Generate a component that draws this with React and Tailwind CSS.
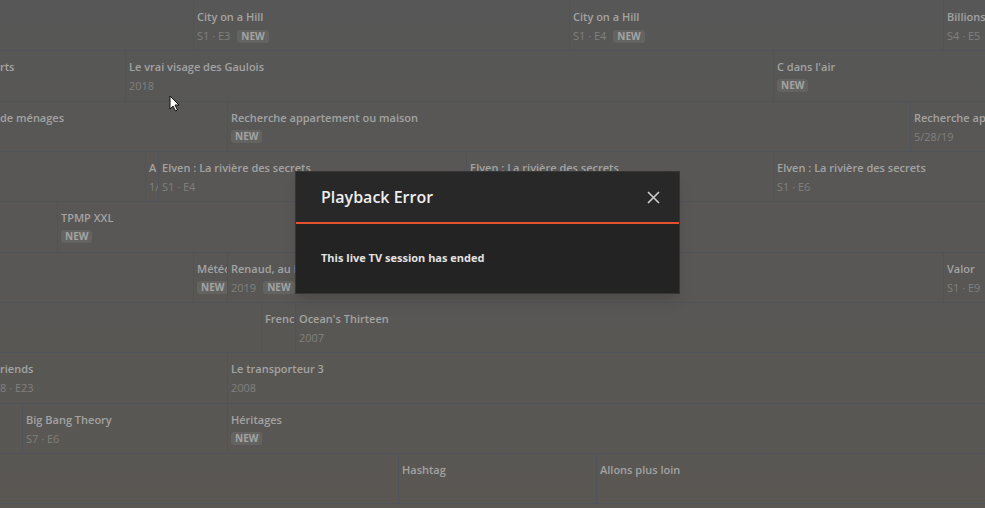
import React from 'react';

const rows = [
  [
    { w: 193 },
    { w: 376, title: 'City on a Hill', meta: 'S1 · E3', isNew: true },
    { w: 374, title: 'City on a Hill', meta: 'S1 · E4', isNew: true },
    { w: 300, title: 'Billions', meta: 'S4 · E5' },
  ],
  [
    { w: 125, title: 'rts', edge: true },
    { w: 648, title: 'Le vrai visage des Gaulois', meta: '2018' },
    { w: 400, title: "C dans l'air", isNew: true },
  ],
  [
    { w: 227, title: 'de ménages', edge: true },
    { w: 683, title: 'Recherche appartement ou maison', isNew: true },
    { w: 400, title: 'Recherche appartement ou maison', meta: '5/28/19' },
  ],
  [
    { w: 145 },
    { w: 13, title: 'A', meta: '1/' },
    { w: 308, title: 'Elven : La rivière des secrets', meta: 'S1 · E4' },
    { w: 307, title: 'Elven : La rivière des secrets', meta: 'S1 · E5' },
    { w: 400, title: 'Elven : La rivière des secrets', meta: 'S1 · E6' },
  ],
  [
    { w: 57 },
    { w: 1000, title: 'TPMP XXL', isNew: true },
  ],
  [
    { w: 193 },
    { w: 34, title: 'Météo', isNew: true },
    { w: 716, title: 'Renaud, au bout de la nuit', meta: '2019', isNew: true },
    { w: 300, title: 'Valor', meta: 'S1 · E9' },
  ],
  [
    { w: 261 },
    { w: 34, title: 'French Cancan' },
    { w: 1000, title: "Ocean's Thirteen", meta: '2007' },
  ],
  [
    { w: 227, title: 'riends', meta: '8 · E23', edge: true },
    { w: 1000, title: 'Le transporteur 3', meta: '2008' },
  ],
  [
    { w: 22 },
    { w: 205, title: 'Big Bang Theory', meta: 'S7 · E6' },
    { w: 1000, title: 'Héritages', isNew: true },
  ],
  [
    { w: 398 },
    { w: 198, title: 'Hashtag' },
    { w: 600, title: 'Allons plus loin' },
  ],
  [{ w: 1200 }],
];

function Cell({ cell, first }) {
  return (
    <div
      className={`h-full shrink-0 overflow-hidden ${first ? '' : 'border-l border-[#51535a]'} ${cell.edge ? 'pl-0' : 'pl-[3px]'} pt-[9px]`}
      style={{ width: cell.w }}
    >
      {cell.title && (
        <div className="whitespace-nowrap text-[11px] font-semibold leading-[14px] text-[#a3a3a2]">{cell.title}</div>
      )}
      {(cell.meta || cell.isNew) && (
        <div className="mt-[5px] flex items-center gap-[7px] whitespace-nowrap">
          {cell.meta && <span className="text-[11px] leading-[14px] text-[#80807e]">{cell.meta}</span>}
          {cell.isNew && (
            <span className="rounded-[3px] bg-[#636361] px-[4px] text-[10px] font-bold leading-[13px] text-[#a3a3a2]">NEW</span>
          )}
        </div>
      )}
    </div>
  );
}

export default function App() {
  return (
    <div
      className="relative h-[508px] w-[985px] overflow-hidden bg-gradient-to-b from-[#575757] to-[#5a5753] pt-[1px]"
      style={{ fontFamily: '"Open Sans", "Noto Sans", sans-serif' }}
    >
      {rows.map((row, i) => (
        <div key={i} className="flex h-[50.33px] border-b border-[#51535a]">
          {row.map((cell, j) => (
            <Cell key={j} cell={cell} first={j === 0} />
          ))}
        </div>
      ))}

      {/* mouse pointer */}
      <svg className="absolute left-[169px] top-[95px]" width="11" height="17" viewBox="0 0 11 17">
        <path d="M1 1 L1 14 L4 11 L6.5 16 L8.5 15 L6 10 L10 10 Z" fill="#fff" stroke="#111" strokeWidth="1" strokeLinejoin="round" />
      </svg>

      {/* Playback error dialog */}
      <div className="absolute left-[295px] top-[171px] w-[385px] border border-[#363636] bg-[#232323] shadow-lg">
        <div className="flex h-[50px] items-center justify-between bg-[#282828] pl-[25px] pr-[19px]">
          <h2 className="-mt-[1px] text-[16px] font-semibold text-[#eeeeee]">Playback Error</h2>
          <svg width="13" height="13" viewBox="0 0 13 13" className="text-[#cfcfcf]">
            <path d="M1 1 L12 12 M12 1 L1 12" stroke="currentColor" strokeWidth="1.6" />
          </svg>
        </div>
        <div className="h-[2px] bg-[#e5512e]" />
        <div className="flex h-[69px] items-center pl-[25px]">
          <p className="text-[11px] font-bold text-[#e2e2e2]">This live TV session has ended</p>
        </div>
      </div>
    </div>
  );
}
